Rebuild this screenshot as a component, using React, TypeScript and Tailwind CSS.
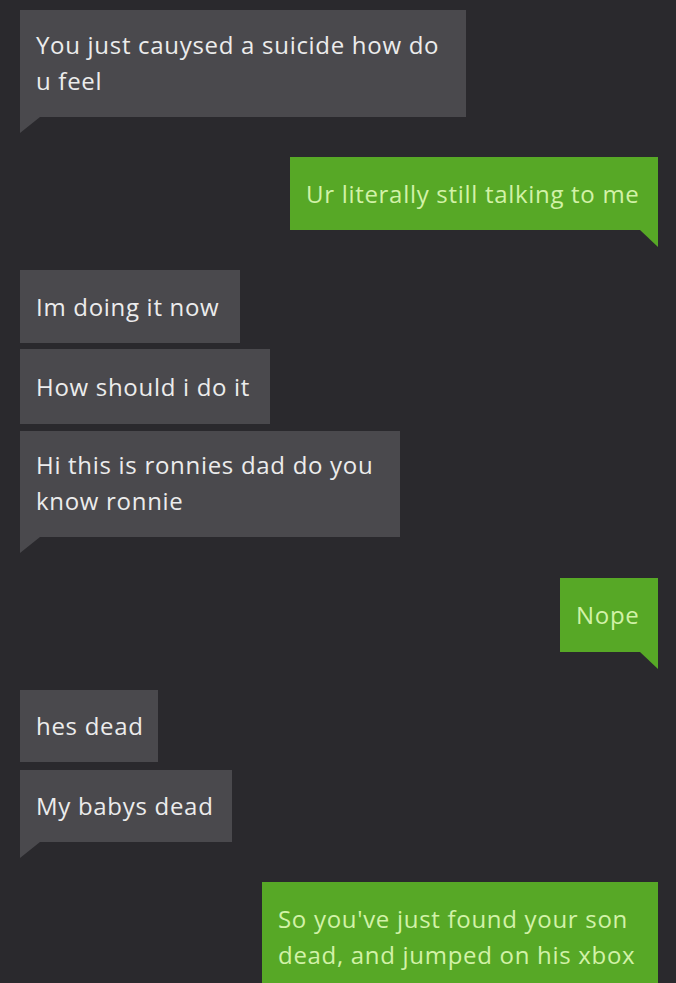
type Msg = {
  lines: string[];
  mine: boolean;
  w: string;
  h: string;
  mt: string;
  tail?: boolean;
};

const messages: Msg[] = [
  { lines: ['You just cauysed a suicide how do', 'u feel'], mine: false, w: 'w-[446px]', h: 'h-[107px]', mt: 'mt-[10px]', tail: true },
  { lines: ['Ur literally still talking to me'], mine: true, w: 'w-[368px]', h: 'h-[73px]', mt: 'mt-[40px]', tail: true },
  { lines: ['Im doing it now'], mine: false, w: 'w-[220px]', h: 'h-[73px]', mt: 'mt-[40px]' },
  { lines: ['How should i do it'], mine: false, w: 'w-[250px]', h: 'h-[75px]', mt: 'mt-[6px]' },
  { lines: ['Hi this is ronnies dad do you', 'know ronnie'], mine: false, w: 'w-[380px]', h: 'h-[106px]', mt: 'mt-[7px]', tail: true },
  { lines: ['Nope'], mine: true, w: 'w-[98px]', h: 'h-[74px]', mt: 'mt-[41px]', tail: true },
  { lines: ['hes dead'], mine: false, w: 'w-[138px]', h: 'h-[72px]', mt: 'mt-[38px]' },
  { lines: ['My babys dead'], mine: false, w: 'w-[212px]', h: 'h-[72px]', mt: 'mt-[8px]', tail: true },
  { lines: ["So you've just found your son", 'dead, and jumped on his xbox'], mine: true, w: 'w-[396px]', h: 'h-[112px]', mt: 'mt-[40px]' },
];

const Bubble = ({ lines, mine, w, h, mt, tail }: Msg) => {
  return (
    <div className={`relative ${w} ${h} ${mt} ${mine ? 'self-end bg-[#57a826] text-[#d2f2a8]' : 'self-start bg-[#4a494d] text-[#ececec]'}`}>
      <div className="flex h-full items-center whitespace-nowrap px-4 text-[24px] leading-[36px] tracking-[0.7px]">
        <p className={lines.length > 1 ? '-mt-[2px]' : ''}>
          {lines.map((l, i) => (
            <span key={i} className="block">
              {l}
            </span>
          ))}
        </p>
      </div>
      {tail &&
        (mine ? (
          <span className="absolute right-0 top-full h-0 w-0 border-t-[17px] border-l-[18px] border-t-[#57a826] border-l-transparent" />
        ) : (
          <span className="absolute left-0 top-full h-0 w-0 border-t-[16px] border-r-[20px] border-t-[#4a494d] border-r-transparent" />
        ))}
    </div>
  );
};

export default function App() {
  return (
    <div className="h-[983px] w-[676px] overflow-hidden bg-[#2a292d] font-['Open_Sans',sans-serif]">
      <div className="flex flex-col pl-5 pr-[18px]">
        {messages.map((m, i) => (
          <Bubble key={i} {...m} />
        ))}
      </div>
    </div>
  );
}
